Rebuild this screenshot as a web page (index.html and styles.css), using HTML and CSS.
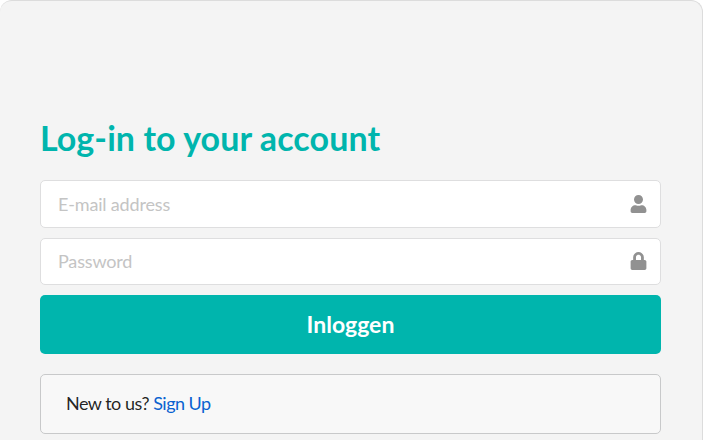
FILE: index.html
```html
<!DOCTYPE html>
<html lang="en">
<head>
<meta charset="utf-8">
<title>Log-in</title>
<link rel="stylesheet" href="styles.css">
</head>
<body>
<main class="segment">
  <h2 class="header">Log-in to your account</h2>
  <form class="form">
    <div class="field">
      <input type="text" placeholder="E-mail address">
      <svg class="icon" viewBox="0 0 448 512"><path d="M224 256c70.700 0 128-57.300 128-128S294.700 0 224 0 96 57.300 96 128s57.300 128 128 128zm89.600 32h-16.700c-22.200 10.200-46.900 16-72.900 16s-50.600-5.800-72.900-16h-16.700C60.200 288 0 348.200 0 422.400V464c0 26.500 21.500 48 48 48h352c26.500 0 48-21.500 48-48v-41.600c0-74.200-60.200-134.400-134.400-134.400z"/></svg>
    </div>
    <div class="field">
      <input type="password" placeholder="Password">
      <svg class="icon" viewBox="0 0 448 512"><path d="M400 224h-24v-72C376 68.200 307.800 0 224 0S72 68.200 72 152v72H48c-26.500 0-48 21.500-48 48v192c0 26.500 21.500 48 48 48h352c26.500 0 48-21.500 48-48V272c0-26.500-21.500-48-48-48zm-104 0H152v-72c0-39.700 32.300-72 72-72s72 32.300 72 72v72z"/></svg>
    </div>
    <button class="submit" type="button">Inloggen</button>
  </form>
  <div class="message">New to us? <a href="#">Sign Up</a></div>
</main>
</body>
</html>
```
FILE: styles.css
```css
* { box-sizing: border-box; }
body {
  margin: 0;
  background: #fff;
  color: rgba(0, 0, 0, .87);
  font-family: Lato, sans-serif;
  font-size: 18px;
}
.segment {
  width: 703px;
  height: 440px;
  padding: 116px 41px 0 40px;
  background: #f4f4f4;
  border: 1px solid #dcdcdc;
  border-width: 1px 1px 0 0;
  border-radius: 12px 12px 0 0;
}
.header {
  margin: 0 0 21px;
  color: #00b5ad;
  font-size: 34px;
  font-weight: 700;
  letter-spacing: .08px;
  line-height: 42px;
}
.form { display: flex; flex-direction: column; gap: 10px; }
.field {
  display: flex;
  align-items: center;
  height: 48px;
  padding: 0 13px 0 17px;
  background: #fff;
  border: 1px solid #dededf;
  border-radius: 5px;
}
.field + .field { height: 47px; padding-bottom: 1px; }
.field input {
  flex: 1;
  min-width: 0;
  padding: 0;
  border: 0;
  outline: 0;
  background: transparent;
  font: inherit;
  letter-spacing: -.17px;
}
.field input::placeholder { color: #c4c4c4; opacity: 1; }
.icon { width: 17px; height: 18px; margin-bottom: 1px; fill: #919191; }
.submit {
  height: 59px;
  padding: 0 0 2px;
  border: 0;
  border-radius: 5px;
  background: #00b5ad;
  color: #fff;
  font: 700 23px Lato, sans-serif;
}
.message {
  height: 60px;
  margin-top: 20px;
  padding: 0 25px;
  background: #f8f8f8;
  border: 1px solid #c8c9ca;
  border-radius: 5px;
  letter-spacing: -.51px;
  line-height: 57px;
}
.message a { color: #0a62d0; text-decoration: none; }
```
